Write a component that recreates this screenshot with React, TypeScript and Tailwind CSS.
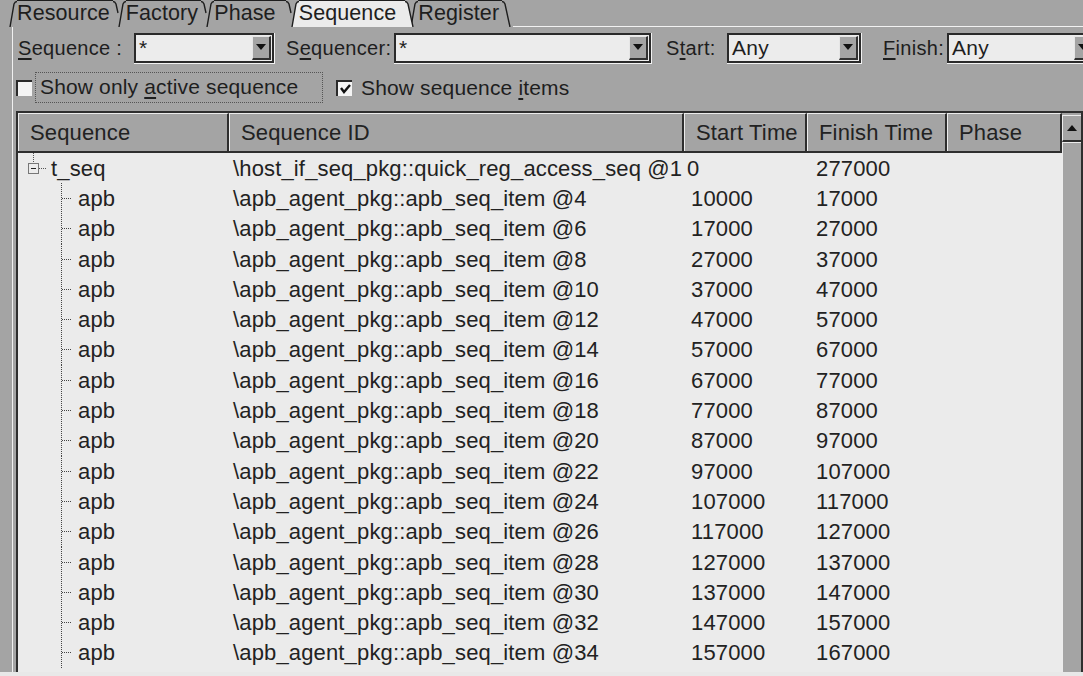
import { ReactNode } from "react";

const FONT = { fontFamily: '"Liberation Sans", Arial, sans-serif' };

const tabs = [
  { label: "Resource", pad: "pr-[3px]" },
  { label: "Factory", pad: "pr-[3px]" },
  { label: "Phase", pad: "pr-[10px]" },
  { label: "Sequence", pad: "pr-[9px]" },
  { label: "Register", pad: "pr-[3px]" },
];

const items = Array.from({ length: 16 }, (_, i) => {
  const start = 10000 + i * 10000 - (i === 0 ? 0 : 3000);
  return {
    id: `\\apb_agent_pkg::apb_seq_item @${4 + i * 2}`,
    start: i === 0 ? "10000" : String(start),
    finish: i === 0 ? "17000" : String(start + 10000),
  };
});

const Tab = ({ label, pad, active, last }: { label: string; pad: string; active: boolean; last: boolean }) => (
  <div className={`flex items-end h-[27px] ${active ? "relative z-10" : ""} -mr-[4px]`}>
    <svg width="8" height="27" className="shrink-0">
      {active && <path d="M1 27 L5 4 Q6 1.5 8 1.5 L8 27 Z" fill="#ebebeb" />}
      <path d="M1 27 L5 4 Q6 1.5 8 1.5" stroke="#1e1e1e" strokeWidth="1.4" fill="none" />
    </svg>
    <div
      className={`h-[27px] border-t-[1.5px] border-[#1e1e1e] ${pad} leading-[24px] text-[21.5px] tracking-[0.1px] text-[#1e1e1e] ${
        active ? "bg-[#ebebeb]" : ""
      }`}
    >
      {label}
    </div>
    <svg width="9" height="27" className="shrink-0">
      {active && <path d="M0 1.5 Q2 1.5 3 4 L8 27 L0 27 Z" fill="#ebebeb" />}
      <path
        d={active || last ? "M0 1.5 Q2 1.5 3 4 L8 27" : "M0 1.5 Q2 1.5 3 4 L5 13"}
        stroke="#1e1e1e"
        strokeWidth="1.4"
        fill="none"
      />
    </svg>
  </div>
);

const U = ({ children }: { children: ReactNode }) => <span className="underline underline-offset-[3px]">{children}</span>;

const Combo = ({ value, width }: { value: string; width: string }) => (
  <div className={`${width} shrink-0 h-[31px] border-b border-r border-[#f2f2f2]`}>
    <div className="h-full flex border-2 border-[#2a2a2a] bg-[#ececec]">
      <div className="flex-1 pl-[3px] text-[21px] leading-[26px] text-[#1e1e1e] overflow-hidden">{value}</div>
      <div className="w-[19px] my-[1px] mr-[1px] bg-[#a4a4a4] border-t border-l border-[#e6e6e6] border-b-2 border-r-2 border-b-[#303030] border-r-[#303030] flex items-center justify-center">
        <svg width="10" height="6">
          <path d="M0 0 L10 0 L5 6 Z" fill="#111" />
        </svg>
      </div>
    </div>
  </div>
);

const CheckBox = ({ checked }: { checked: boolean }) => (
  <div className="w-[16px] h-[16px] shrink-0 border-t-2 border-l-2 border-[#2a2a2a] bg-[#f4f4f4] flex items-center justify-center">
    {checked && (
      <svg width="11" height="10">
        <path d="M1 4 L4 8 L10 1" stroke="#111" strokeWidth="2.4" fill="none" />
      </svg>
    )}
  </div>
);

const cols = [
  { label: "Sequence", w: "w-[211px]" },
  { label: "Sequence ID", w: "w-[455px]" },
  { label: "Start Time", w: "w-[123px]" },
  { label: "Finish Time", w: "w-[140px]" },
  { label: "Phase", w: "flex-1" },
];

const Row = ({ name, id, start, finish, root }: { name: string; id: string; start: string; finish: string; root?: boolean }) => (
  <div className="flex h-[30.3px] items-center text-[22px] text-[#222] whitespace-nowrap">
    <div className="w-[211px] flex items-center h-full">
      {root ? (
        <svg width="33" height="30" className="shrink-0">
          <line x1="15.5" y1="0" x2="15.5" y2="10" stroke="#555" strokeDasharray="1 1" />
          <rect x="10.5" y="10.5" width="10" height="10" fill="#ececec" stroke="#777" />
          <line x1="13" y1="15.5" x2="18" y2="15.5" stroke="#222" />
          <line x1="21" y1="15.5" x2="29" y2="15.5" stroke="#555" strokeDasharray="1 1" />
        </svg>
      ) : (
        <svg width="60" height="31" className="shrink-0">
          <line x1="43.5" y1="0" x2="43.5" y2="31" stroke="#444" strokeDasharray="1 1" />
          <line x1="44" y1="15.5" x2="53" y2="15.5" stroke="#444" strokeDasharray="1 1" />
        </svg>
      )}
      <span>{name}</span>
    </div>
    <div className="w-[455px] pl-[4px] overflow-visible">{id}</div>
    <div className={`w-[123px] ${root ? "pl-[3px]" : "pl-[7px]"}`}>{start}</div>
    <div className="w-[140px] pl-[9px]">{finish}</div>
    <div className="flex-1" />
  </div>
);

export default function App() {
  return (
    <div className="w-[1083px] h-[676px] overflow-hidden bg-[#a4a4a4] flex flex-col tracking-[0.15px]" style={FONT}>
      {/* tabs */}
      <div className="flex h-[27px] pl-[9px] shrink-0">
        {tabs.map((t, i) => (
          <Tab key={t.label} label={t.label} pad={t.pad} active={t.label === "Sequence"} last={i === tabs.length - 1} />
        ))}
        <div className="flex-1 border-b border-[#f2f2f2] ml-[6px]" />
      </div>

      {/* panel */}
      <div className="flex-1 flex flex-col ml-[12px] border-l border-[#f0f0f0] min-h-0">
        <div className="flex items-center h-[38px] pt-[4px] pl-[5px] text-[20px] tracking-[0.3px] text-[#1e1e1e] whitespace-nowrap">
          <span className="w-[116px] shrink-0">
            <U>S</U>equence :
          </span>
          <Combo value="*" width="w-[141px]" />
          <span className="ml-[11px] w-[108px] shrink-0">
            S<U>e</U>quencer:
          </span>
          <Combo value="*" width="w-[258px]" />
          <span className="ml-[14px] w-[61px] shrink-0">
            S<U>t</U>art:
          </span>
          <Combo value="Any" width="w-[135px]" />
          <span className="ml-[21px] w-[64px] shrink-0">
            <U>F</U>inish:
          </span>
          <Combo value="Any" width="w-[150px]" />
        </div>

        <div className="flex items-center h-[41px] pl-[3px] pt-[4px] text-[21px] text-[#1e1e1e] whitespace-nowrap">
          <CheckBox checked={false} />
          <div className="ml-[3px] h-[31px] w-[288px] border border-dotted border-[#555] pl-[4px] leading-[28px]">
            Show only <U>a</U>ctive sequence
          </div>
          <div className="ml-[13px]">
            <CheckBox checked />
          </div>
          <span className="ml-[9px]">
            Show sequence <U>i</U>tems
          </span>
        </div>

        {/* table */}
        <div className="flex-1 min-h-0 mt-[5px] ml-[3px] flex border-t-2 border-l-2 border-[#2e2e2e] overflow-hidden">
          <div className="flex-1 flex flex-col min-w-0">
            <div className="flex h-[40px] shrink-0 border-b-2 border-[#2e2e2e] text-[22px] text-[#222] whitespace-nowrap">
              {cols.map((c) => (
                <div
                  key={c.label}
                  className={`${c.w} border-t border-l border-[#ececec] border-r-2 border-r-[#2e2e2e] pl-[11px] flex items-center`}
                >
                  {c.label}
                </div>
              ))}
            </div>
            <div className="flex-1 bg-[#ebebeb] overflow-hidden">
              <Row name="t_seq" id="\host_if_seq_pkg::quick_reg_access_seq @1" start="0" finish="277000" root />
              {items.map((it) => (
                <Row key={it.id} name="apb" id={it.id} start={it.start} finish={it.finish} />
              ))}
            </div>
          </div>
          {/* scrollbar */}
          <div className="w-[21px] shrink-0 flex flex-col border-r-2 border-[#2e2e2e]">
            <div className="h-[27px] mt-[2px] border-t border-l border-[#ececec] border-b-2 border-b-[#2e2e2e] flex items-center justify-center">
              <svg width="10" height="6">
                <path d="M0 6 L10 6 L5 0 Z" fill="#111" />
              </svg>
            </div>
            <div className="flex-1 border-t border-l border-[#ececec]" />
          </div>
        </div>
      </div>
      <div className="h-[4px] shrink-0 bg-[#e8e8e8]" />
    </div>
  );
}
